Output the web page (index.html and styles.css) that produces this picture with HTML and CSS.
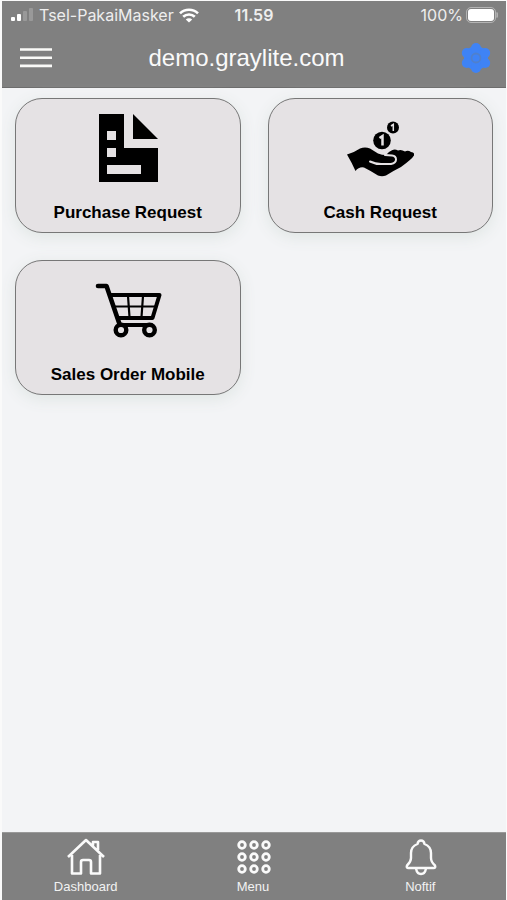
FILE: index.html
```html
<!DOCTYPE html>
<html lang="en">
<head>
<meta charset="utf-8">
<meta name="viewport" content="width=device-width, initial-scale=1">
<title>demo.graylite.com</title>
<link rel="stylesheet" href="styles.css">
</head>
<body>
<div class="app">
  <header class="top">
    <div class="status">
      <div class="carrier">
        <svg width="24" height="14" viewBox="0 0 24 14" aria-hidden="true" fill="#fff"><rect x="1" y="9" width="4" height="4" rx="1"/><rect x="7" y="6" width="4" height="7" rx="1"/><rect x="13" y="3" width="4" height="10" rx="1" opacity=".2"/><rect x="19" y="0" width="4" height="13" rx="1" opacity=".2"/></svg>
        <span>Tsel-PakaiMasker</span>
        <svg width="20" height="15" viewBox="0 0 20 15" aria-hidden="true" fill="none" stroke="#fff" stroke-width="2.6"><path d="M1 5.4a12.8 12.8 0 0 1 18 0M4.2 8.8a8.3 8.3 0 0 1 11.6 0"/><path d="M10 14.6 6.8 11.5a4.6 4.6 0 0 1 6.4 0z" fill="#fff" stroke="none"/></svg>
      </div>
      <time class="clock">11.59</time>
      <div class="power">
        <span>100%</span>
        <svg width="32" height="16" viewBox="0 0 32 16" aria-hidden="true"><rect x=".5" y=".5" width="29" height="15" rx="4.5" fill="none" stroke="#b4b4b4"/><rect x="2" y="2" width="26" height="12" rx="3" fill="#fff"/><path d="M31 5.5q1 2.500 0 5z" fill="#b4b4b4" stroke="#b4b4b4"/></svg>
      </div>
    </div>
    <div class="bar">
      <button class="icon-button" type="button" aria-label="Open navigation">
        <svg width="32" height="20" viewBox="0 0 32 20" fill="none" stroke="#fafaf8" stroke-width="2.600"><path d="M0 1.500h32M0 9.700h32M0 17.900h32"/></svg>
      </button>
      <h1 class="title">demo.graylite.com</h1>
      <button class="icon-button" type="button" aria-label="Settings">
        <svg width="30" height="32" viewBox="0 0 30 32"><g fill="#3f83f5"><circle cx="15" cy="16" r="12"/><circle cx="15" cy="6" r="5"/><circle cx="15" cy="26" r="5"/><circle cx="5.800" cy="11" r="5"/><circle cx="24.200" cy="11" r="5"/><circle cx="5.800" cy="21" r="5"/><circle cx="24.200" cy="21" r="5"/></g><circle cx="15" cy="16" r="4.500" fill="none" stroke="#5080cc" stroke-width="1.800"/></svg>
      </button>
    </div>
  </header>

  <main class="content">
    <div class="cards">
      <a class="card" href="#purchase">
        <svg width="68" height="68" viewBox="0 0 68 68" aria-hidden="true"><path fill="#000" fill-rule="evenodd" d="M5 0h25v34h34v34H5zM13 17v9h9v-9zM13 34v9h9v-9zM13 51v9h34v-9zM39 0l25 25H39z"/></svg>
        <span class="label">Purchase Request</span>
      </a>
      <a class="card" href="#cash">
        <svg width="68" height="68" viewBox="0 0 68 68" aria-hidden="true"><g transform="translate(1 0)"><path fill="#000" d="M0 40.500Q8 38 13 34.500Q18 32.500 23 34.500Q27 37 31 39.500Q35 41 39 41Q42 37.500 45 36.200Q48 34.700 51 36.500Q54 35 58 37.500Q61 36 64 38Q68 38.500 67 41.500Q65 45 54 53Q46 57 39 61.500Q35 63 31 61.500Q24 57 17 53.500Q12 52.500 8.500 57Q5 49 0 40.500Z"/><path d="M23 47.500Q29 50.500 36 50H44Q49 49 49 45.500Q49 42 45 41.500L38 41" fill="none" stroke="#e5e2e4" stroke-width="2" stroke-linecap="round"/><circle cx="35" cy="26.500" r="8.800"/><circle cx="46" cy="13.500" r="6"/><path d="M32.500 24l3-2v9.500" fill="none" stroke="#e5e2e4" stroke-width="2.500"/><path d="M44 12l2.300-1.500v6.500" fill="none" stroke="#e5e2e4" stroke-width="1.500"/></g></svg>
        <span class="label">Cash Request</span>
      </a>
      <a class="card" href="#sales">
        <svg width="68" height="68" viewBox="0 0 68 68" aria-hidden="true" fill="none" stroke="#000" stroke-linecap="round" stroke-linejoin="round"><path d="M4 10h8.500l14 41" stroke-width="4.600"/><path d="M16 19h49.500l-7 23H24" stroke-width="4"/><path d="M19 30.500h43M34 20l1.500 21M49 20l-1.500 21" stroke-width="2.200"/><path d="M26 49h31" stroke-width="4"/><circle cx="27" cy="54" r="5.300" fill="#e5e2e4" stroke-width="4.400"/><circle cx="55.500" cy="54" r="5.300" fill="#e5e2e4" stroke-width="4.400"/></svg>
        <span class="label">Sales Order Mobile</span>
      </a>
    </div>
  </main>

  <nav class="tabs" aria-label="Main">
    <a class="tab" href="#dashboard">
      <svg width="40" height="38" viewBox="0 0 40 38" aria-hidden="true" fill="none" stroke="#fafafa" stroke-width="2.600" stroke-linejoin="round"><path d="M6 17V35.500H15V24Q15 22 17 22H23Q25 22 25 24V35.500H34V17M2 19L20 2L38 19M27 7.500V4H32V12"/></svg>
      <span>Dashboard</span>
    </a>
    <a class="tab" href="#menu">
      <svg width="40" height="38" viewBox="0 0 40 38" aria-hidden="true" fill="none" stroke="#fafafa" stroke-width="2.800"><circle cx="9" cy="7" r="3.300"/><circle cx="21" cy="7" r="3.300"/><circle cx="33" cy="7" r="3.300"/><circle cx="9" cy="19" r="3.300"/><circle cx="21" cy="19" r="3.300"/><circle cx="33" cy="19" r="3.300"/><circle cx="9" cy="31" r="3.300"/><circle cx="21" cy="31" r="3.300"/><circle cx="33" cy="31" r="3.300"/></svg>
      <span>Menu</span>
    </a>
    <a class="tab" href="#notif">
      <svg width="40" height="38" viewBox="0 0 40 38" aria-hidden="true" fill="none" stroke="#fafafa" stroke-width="2.400" stroke-linejoin="round"><path d="M17.500 6Q18 2.500 21 2.500T24.500 6Q31 8.500 31 15V20Q31 24 35 27.500Q36 30 33.500 30H8.500Q6 30 7 27.500Q11 24 11 20V15Q11 8.500 17.500 6ZM16 30.500Q17 36 21 36T26 30.500"/></svg>
      <span>Noftif</span>
    </a>
  </nav>
</div>
</body>
</html>
```

FILE: styles.css
```css
* { box-sizing: border-box; }

body {
  margin: 0;
  background: #fafafa;
  font-family: "Liberation Sans", Arial, sans-serif;
}

a { color: inherit; text-decoration: none; }
svg { display: block; flex: none; }

.app {
  display: flex;
  flex-direction: column;
  min-height: 100vh;
  padding: 1px 1px 0 2px;
}

.top {
  padding: 0 8px 12px;
  background: #808080;
  border-bottom: 1px solid #6d6d6d;
  color: #fafafa;
}

.status {
  display: grid;
  grid-template-columns: 1fr auto 1fr;
  align-items: center;
  height: 28px;
  font: 16px/28px Inter, sans-serif;
  color: #eee;
}

.carrier,
.power {
  display: flex;
  align-items: center;
  gap: 5px;
}

.power { justify-content: flex-end; gap: 3px; }
.clock { font-weight: 600; }

.bar {
  display: flex;
  align-items: center;
  height: 46px;
  padding: 12px 7px 0 10px;
}

.icon-button {
  display: flex;
  padding: 0;
  border: 0;
  background: none;
  cursor: pointer;
}

.title {
  flex: 1;
  margin: 0;
  padding-right: 20px;
  font-size: 24px;
  font-weight: 400;
  line-height: 28px;
  text-align: center;
}

.content {
  flex: 1;
  background: #f3f4f6;
}

.cards {
  display: grid;
  grid-template-columns: 1fr 1fr;
  gap: 27px;
  padding: 10px 13px;
}

.card {
  display: flex;
  flex-direction: column;
  align-items: center;
  gap: 20px;
  padding: 15px 8px 8px;
  border: 1px solid #777;
  border-radius: 27px;
  background: #e5e2e4;
  box-shadow: 0 4px 16px #dfe5e3;
  color: #000;
}

.label {
  font-size: 17px;
  font-weight: 700;
  line-height: 22px;
}

.tabs {
  display: grid;
  grid-template-columns: repeat(3, 1fr);
  padding: 5px 2px 4px 0;
  border-top: 1px solid #999;
  background: #808080;
  color: #f2f2f2;
}

.tab {
  display: flex;
  flex-direction: column;
  align-items: center;
  gap: 2px;
  font-size: 13px;
  line-height: 18px;
}
```
